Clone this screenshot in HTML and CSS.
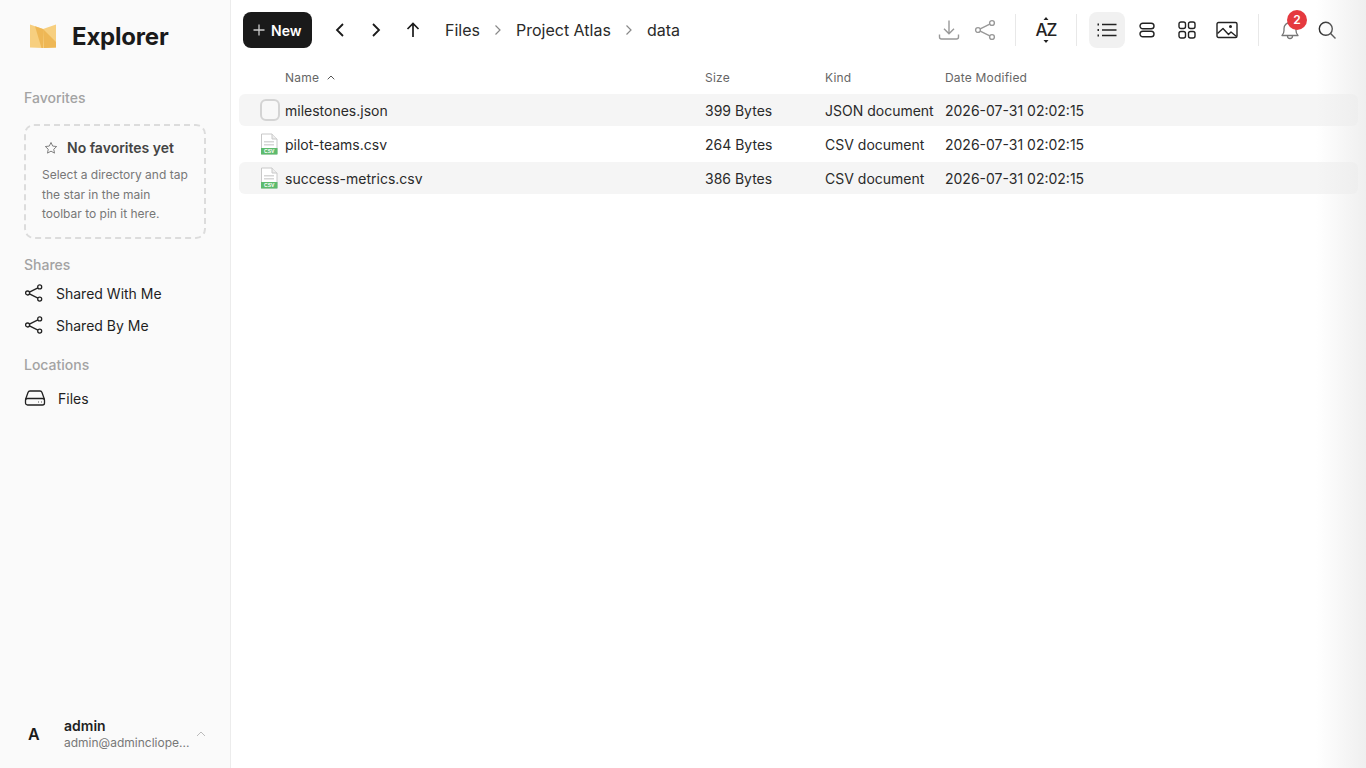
FILE: index.html
```html
<!DOCTYPE html>
<html lang="en">
<head>
    <meta charset="UTF-8">
    <title>Explorer</title>
    <link rel="stylesheet" href="styles.css">
</head>
<body>
    <aside class="sidebar">
        <div class="brand">
            <svg class="brand-logo" width="28" height="24" viewBox="0 0 28 24">
                <path d="M1 0.5 L14 5 V24 L1 23.5 Z" fill="#f7cf7f"/>
                <path d="M6 2.2 L14 5 V24 L12.5 24 Z" fill="#eeb755"/>
                <path d="M27 0.5 L14 5 V24 L27 23.5 Z" fill="#f7cf7f"/>
                <path d="M14 5 L15 24 L27 23.5 V18 Z" fill="#eeb755"/>
            </svg>
            <span class="brand-name">Explorer</span>
        </div>

        <div class="section-title favorites-title">Favorites</div>
        <div class="fav-card">
            <div class="fav-head">
                <svg width="14" height="14" viewBox="0 0 24 24" fill="none" stroke="#777" stroke-width="1.6" stroke-linejoin="round"><path d="M12 2.5l2.9 6.2 6.8.8-5 4.6 1.3 6.7-6-3.4-6 3.4 1.3-6.7-5-4.6 6.8-.8z"/></svg>
                <span>No favorites yet</span>
            </div>
            <p>Select a directory and tap the star in the main toolbar to pin it here.</p>
        </div>

        <div class="section-title shares-title">Shares</div>
        <div class="nav-item">
            <svg width="20" height="20" viewBox="0 0 20 20" fill="none" stroke="#222" stroke-width="1.3"><circle cx="15.7" cy="3.9" r="2"/><circle cx="15.7" cy="16.1" r="2"/><circle cx="3.6" cy="10" r="2"/><path d="M5.4 9.1L13.9 4.8M5.4 10.9L13.9 15.2"/></svg>
            <span>Shared With Me</span>
        </div>
        <div class="nav-item">
            <svg width="20" height="20" viewBox="0 0 20 20" fill="none" stroke="#222" stroke-width="1.3"><circle cx="15.7" cy="3.9" r="2"/><circle cx="15.7" cy="16.1" r="2"/><circle cx="3.6" cy="10" r="2"/><path d="M5.4 9.1L13.9 4.8M5.4 10.9L13.9 15.2"/></svg>
            <span>Shared By Me</span>
        </div>

        <div class="section-title locations-title">Locations</div>
        <div class="nav-item nav-files">
            <svg width="22" height="20" viewBox="0 0 22 20" fill="none" stroke="#222" stroke-width="1.3" stroke-linejoin="round"><path d="M1.5 11.5L4 4.5C4.3 3.6 5 3 6 3h10c1 0 1.700.6 2 1.500l2.500 7"/><rect x="1.500" y="10.500" width="19" height="6.500" rx="2"/><path d="M14.500 14h.5M17 14h.5"/></svg>
            <span>Files</span>
        </div>

        <div class="user">
            <span class="avatar">A</span>
            <div class="user-info">
                <div class="user-name">admin</div>
                <div class="user-mail">admin@adminclio​pe...</div>
            </div>
            <svg width="10" height="6" viewBox="0 0 10 6" fill="none" stroke="#bbb" stroke-width="1"><path d="M1 5l4-4 4 4"/></svg>
        </div>
    </aside>

    <main class="main">
        <header class="toolbar">
            <button class="new-btn">
                <svg width="12" height="12" viewBox="0 0 12 12" stroke="#ccc" stroke-width="1.300"><path d="M6 0.500v11M0.500 6h11"/></svg>
                New
            </button>
            <div class="nav-arrows">
                <svg width="12" height="16" viewBox="0 0 12 16" fill="none" stroke="#1a1a1a" stroke-width="1.800"><path d="M9 2L3 8l6 6"/></svg>
                <svg width="12" height="16" viewBox="0 0 12 16" fill="none" stroke="#1a1a1a" stroke-width="1.800"><path d="M3 2l6 6-6 6"/></svg>
                <svg width="14" height="16" viewBox="0 0 14 16" fill="none" stroke="#1a1a1a" stroke-width="1.700"><path d="M7 15V1.500M1.500 7L7 1.500 12.500 7"/></svg>
            </div>
            <nav class="crumbs">
                <span>Files</span>
                <svg width="8" height="12" viewBox="0 0 8 12" fill="none" stroke="#888" stroke-width="1.200"><path d="M1.500 1.500L6 6l-4.500 4.500"/></svg>
                <span>Project Atlas</span>
                <svg width="8" height="12" viewBox="0 0 8 12" fill="none" stroke="#888" stroke-width="1.200"><path d="M1.500 1.500L6 6l-4.500 4.500"/></svg>
                <span>data</span>
            </nav>
            <div class="tools">
                <svg class="tool" width="22" height="22" viewBox="0 0 22 22" fill="none" stroke="#999" stroke-width="1.400"><path d="M11 1.500v13M6 9.800l5 5 5-5M1.500 15.500v2.500c0 1.300.8 2 2 2h15c1.200 0 2-.7 2-2v-2.500"/></svg>
                <svg class="tool share-tool" width="22" height="22" viewBox="0 0 22 22" fill="none" stroke="#999" stroke-width="1.400"><circle cx="18" cy="4" r="2.400"/><circle cx="18" cy="18" r="2.400"/><circle cx="4" cy="11" r="2.400"/><path d="M6.200 9.900L15.800 5.100M6.200 12.100L15.800 16.900"/></svg>
                <span class="divider div-a"></span>
                <span class="az">
                    <span class="az-text">AZ</span>
                    <svg width="6" height="26" viewBox="0 0 6 26" fill="#222"><path d="M3 0l2.500 3h-5zM3 26l2.500-3h-5z"/></svg>
                </span>
                <span class="divider div-b"></span>
                <span class="view active">
                    <svg width="20" height="14" viewBox="0 0 20 14" fill="none" stroke="#222" stroke-width="1.500"><path d="M5 1.500h14.500M5 7h14.500M5 12.500h14.500"/><path d="M.5 1.500h1.500M.5 7h1.500M.5 12.500h1.500" stroke-width="1.800"/></svg>
                </span>
                <span class="view">
                    <svg width="16" height="16" viewBox="0 0 16 16" fill="none" stroke="#222" stroke-width="1.400"><rect x="1" y="1.200" width="14" height="5.600" rx="2.800"/><rect x="1" y="9.200" width="14" height="5.600" rx="2.800"/></svg>
                </span>
                <span class="view">
                    <svg width="18" height="18" viewBox="0 0 18 18" fill="none" stroke="#222" stroke-width="1.400"><rect x="1" y="1" width="6.500" height="6.500" rx="2"/><rect x="10.500" y="1" width="6.500" height="6.500" rx="2"/><rect x="1" y="10.500" width="6.500" height="6.500" rx="2"/><rect x="10.500" y="10.500" width="6.500" height="6.500" rx="2"/></svg>
                </span>
                <span class="view">
                    <svg width="22" height="18" viewBox="0 0 22 18" fill="none" stroke="#222" stroke-width="1.400" stroke-linejoin="round"><rect x="1" y="1.500" width="20" height="15" rx="1.500"/><path d="M1.500 12.500L7 7.500l5.500 6 2.500-2.500 5.500 4.500"/><circle cx="14.500" cy="5.500" r=".8"/></svg>
                </span>
                <span class="divider div-c"></span>
                <span class="bell">
                    <svg width="22" height="22" viewBox="0 0 22 22" fill="none" stroke="#777" stroke-width="1.300" stroke-linejoin="round"><path d="M3 16.500c1.300-1.300 2-2.500 2-5V9.500a6 6 0 0 1 12 0v2c0 2.500.7 3.700 2 5z"/><path d="M8.500 17a2.500 2.500 0 0 0 5 0"/></svg>
                    <span class="badge">2</span>
                </span>
                <svg class="search" width="20" height="20" viewBox="0 0 20 20" fill="none" stroke="#222" stroke-width="1.400"><circle cx="8.800" cy="8.800" r="6.500"/><path d="M13.600 13.600L18.500 18.500"/></svg>
            </div>
        </header>

        <div class="list-head">
            <div class="col-name">Name
                <svg width="8" height="5" viewBox="0 0 8 5" fill="none" stroke="#555" stroke-width="1"><path d="M.7 4.300L4 1l3.300 3.300"/></svg>
            </div>
            <div class="col-size">Size</div>
            <div class="col-kind">Kind</div>
            <div class="col-date">Date Modified</div>
        </div>

        <div class="row shaded">
            <span class="file-icon"><span class="blank-file"></span></span>
            <div class="col-name">milestones.json</div>
            <div class="col-size">399 Bytes</div>
            <div class="col-kind">JSON document</div>
            <div class="col-date">2026-07-31 02:02:15</div>
        </div>
        <div class="row">
            <span class="file-icon">
                <svg width="18" height="22" viewBox="0 0 18 22"><path d="M1.500 1h10.500l5 5v15H1.500z" fill="#fff" stroke="#c8c8c8"/><path d="M12 1v5h5" fill="#eee" stroke="#c8c8c8"/><path d="M4 8h10v1.500H4zM4 11h10v1.500H4z" fill="#d6d6d6"/><rect x="1" y="15" width="16.500" height="6.500" fill="#5dbb6d"/><text x="9.200" y="20.300" class="csv-tag">CSV</text></svg>
            </span>
            <div class="col-name">pilot-teams.csv</div>
            <div class="col-size">264 Bytes</div>
            <div class="col-kind">CSV document</div>
            <div class="col-date">2026-07-31 02:02:15</div>
        </div>
        <div class="row shaded">
            <span class="file-icon">
                <svg width="18" height="22" viewBox="0 0 18 22"><path d="M1.500 1h10.500l5 5v15H1.500z" fill="#fff" stroke="#c8c8c8"/><path d="M12 1v5h5" fill="#eee" stroke="#c8c8c8"/><path d="M4 8h10v1.500H4zM4 11h10v1.500H4z" fill="#d6d6d6"/><rect x="1" y="15" width="16.500" height="6.500" fill="#5dbb6d"/><text x="9.200" y="20.300" class="csv-tag">CSV</text></svg>
            </span>
            <div class="col-name">success-metrics.csv</div>
            <div class="col-size">386 Bytes</div>
            <div class="col-kind">CSV document</div>
            <div class="col-date">2026-07-31 02:02:15</div>
        </div>
    </main>

    <div class="edge-fade"></div>
</body>
</html>
```

FILE: styles.css
```css
* {
    box-sizing: border-box;
}

body {
    margin: 0;
    height: 768px;
    overflow: hidden;
    display: flex;
    background-color: #fff;
    color: #1f1f1f;
    font-family: Inter, "Liberation Sans", sans-serif;
    font-size: 14px;
}

.sidebar {
    width: 231px;
    height: 768px;
    flex-shrink: 0;
    display: flex;
    flex-direction: column;
    padding: 0 24px;
    background-color: #fafafa;
    border-right: 1px solid #ececec;
}

.brand {
    display: flex;
    align-items: center;
    height: 24px;
    margin-top: 24px;
    padding-left: 5px;
}

.brand-name {
    margin-left: 15px;
    font-size: 24px;
    font-weight: 700;
    color: #1a1a1a;
    letter-spacing: -0.2px;
}

.section-title {
    font-size: 14px;
    line-height: 18px;
    font-weight: 500;
    color: #a3a3a3;
}

.favorites-title {
    margin-top: 41px;
}

.fav-card {
    height: 115px;
    margin-top: 17px;
    padding: 13px 16px 0;
    border: 2px dashed #dcdcdc;
    border-radius: 10px;
}

.fav-head {
    display: flex;
    align-items: center;
    gap: 9px;
    padding-left: 2px;
    font-size: 14px;
    line-height: 18px;
    font-weight: 600;
    color: #444;
}

.fav-card p {
    margin: 8px 0 0;
    font-size: 12px;
    line-height: 19.500px;
    color: #777;
}

.shares-title {
    margin-top: 17px;
}

.nav-item {
    display: flex;
    align-items: center;
    gap: 12px;
    height: 32px;
    font-size: 14px;
    color: #1f1f1f;
}

.shares-title + .nav-item {
    margin-top: 3px;
}

.locations-title {
    margin-top: 15px;
}

.nav-files {
    gap: 12px;
    margin-top: 8px;
}

.user {
    display: flex;
    align-items: center;
    margin-top: auto;
    margin-bottom: 17px;
    height: 34px;
}

.avatar {
    width: 40px;
    font-size: 16px;
    font-weight: 600;
    padding-left: 4px;
    color: #1a1a1a;
}

.user-info {
    flex: 1;
    white-space: nowrap;
}

.user-name {
    font-size: 14px;
    line-height: 17px;
    font-weight: 600;
    color: #1f1f1f;
}

.user-mail {
    font-size: 12px;
    line-height: 17px;
    color: #777;
}

.main {
    flex: 1;
    padding: 0 8px;
    min-width: 0;
}

.toolbar {
    display: flex;
    align-items: center;
    height: 60px;
}

.new-btn {
    display: flex;
    align-items: center;
    gap: 6px;
    width: 69px;
    height: 36px;
    margin-left: 4px;
    padding: 0 0 0 10px;
    border: 0;
    border-radius: 8px;
    background-color: #1a1a1a;
    color: #fff;
    font-family: inherit;
    font-size: 14px;
    font-weight: 600;
}

.nav-arrows {
    display: flex;
    align-items: center;
    gap: 24px;
    margin-left: 22px;
}

.crumbs {
    display: flex;
    align-items: center;
    gap: 14px;
    margin-left: 25px;
    font-size: 16px;
    color: #2a2a2a;
}

.tools {
    display: flex;
    align-items: center;
    margin-left: auto;
}

.share-tool {
    margin-left: 14px;
}

.divider {
    width: 1px;
    height: 32px;
    background-color: #e8e8e8;
}

.div-a {
    margin: 0 18px 0 19px;
}

.az {
    display: flex;
    align-items: center;
    width: 24px;
    height: 26px;
    position: relative;
    justify-content: center;
}

.az-text {
    font-size: 17px;
    font-weight: 500;
    color: #222;
    letter-spacing: -1px;
}

.az svg {
    position: absolute;
    left: 9px;
    top: 0;
}

.div-b {
    margin: 0 12px 0 18px;
}

.view {
    display: flex;
    align-items: center;
    justify-content: center;
    width: 36px;
    height: 36px;
    margin-right: 4px;
    border-radius: 8px;
}

.view.active {
    background-color: #f1f1f1;
}

.div-c {
    margin: 0 20px 0 9px;
}

.bell {
    position: relative;
    display: flex;
}

.badge {
    position: absolute;
    top: -9px;
    left: 8px;
    width: 20px;
    height: 20px;
    border-radius: 50%;
    background-color: #e5393f;
    color: #fff;
    font-size: 12px;
    font-weight: 600;
    line-height: 20px;
    text-align: center;
}

.search {
    margin: 0 21px 0 16px;
}

.list-head,
.row {
    display: flex;
    align-items: center;
    padding-left: 46px;
}

.list-head {
    height: 34px;
    font-size: 12px;
    color: #666;
    letter-spacing: 0.2px;
}

.row {
    position: relative;
    height: 32px;
    margin-bottom: 2px;
    font-size: 14px;
    color: #2a2a2a;
    border-radius: 6px;
}

.row.shaded {
    background-color: #f5f5f5;
}

.col-name {
    width: 420px;
    flex-shrink: 0;
}

.list-head .col-name svg {
    margin-left: 4px;
    vertical-align: 2px;
}

.col-size,
.col-kind {
    width: 120px;
    flex-shrink: 0;
}

.col-date {
    flex: 1;
}

.file-icon {
    position: absolute;
    left: 21px;
    top: 5px;
    display: flex;
}

.blank-file {
    width: 20px;
    height: 22px;
    border: 2px solid #d4d4d4;
    border-radius: 6px;
    background-color: #f8f8f8;
}

.csv-tag {
    font-family: "Liberation Sans", sans-serif;
    font-size: 5px;
    font-weight: 700;
    fill: #fff;
    text-anchor: middle;
}

.edge-fade {
    position: absolute;
    top: 0;
    right: 0;
    width: 50px;
    height: 768px;
    background: linear-gradient(to right, rgba(235, 235, 235, 0), rgba(235, 235, 235, 0.8));
}
```
